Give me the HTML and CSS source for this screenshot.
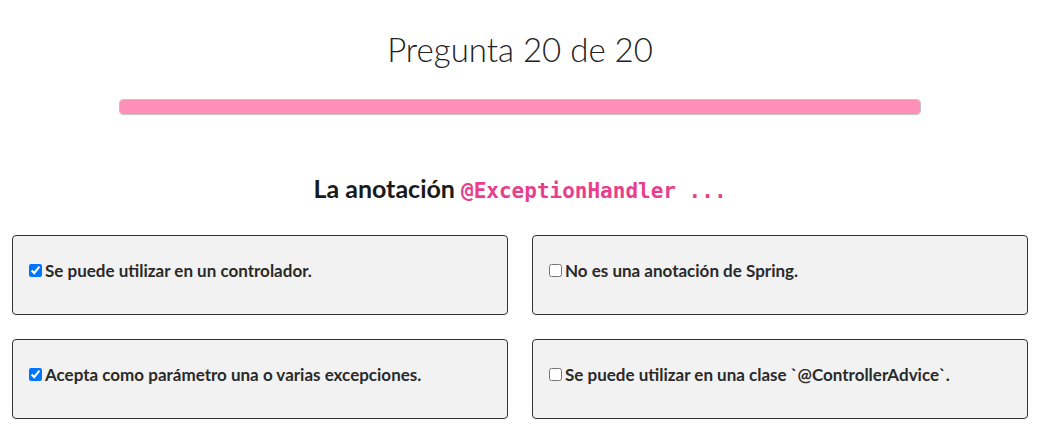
FILE: index.html
```html
<!DOCTYPE html>
<html lang="es">
<head>
<meta charset="utf-8">
<title>Pregunta 20 de 20</title>
<link rel="stylesheet" href="styles.css">
</head>
<body>
<main class="page">
  <h1 class="title">Pregunta 20 de 20</h1>
  <div class="progress"><div class="progress-fill" style="width:100%"></div></div>
  <h2 class="question">La anotación <code class="code">@ExceptionHandler ...</code></h2>
  <div class="options">
    <label class="option"><input type="checkbox" class="check" checked><span>Se puede utilizar en un controlador.</span></label>
    <label class="option"><input type="checkbox" class="check"><span>No es una anotación de Spring.</span></label>
    <label class="option"><input type="checkbox" class="check" checked><span>Acepta como parámetro una o varias excepciones.</span></label>
    <label class="option"><input type="checkbox" class="check"><span>Se puede utilizar en una clase `@ControllerAdvice`.</span></label>
  </div>
</main>
</body>
</html>
```
FILE: styles.css
```css
html, body {
  margin: 0;
  padding: 0;
  background: #fff;
}
body {
  font-family: Lato, "Liberation Sans", sans-serif;
  color: #222;
}
.page {
  width: 1040px;
  padding-top: 1px;
}
.title {
  margin: 28px 0 0;
  text-align: center;
  font-weight: 300;
  font-size: 33px;
  line-height: 40px;
  color: #222;
}
.progress {
  box-sizing: border-box;
  width: 802px;
  height: 16px;
  margin: 30px auto 0;
  border: 1px solid #c4c4c4;
  border-radius: 4px;
  background: #eee;
  overflow: hidden;
}
.progress-fill {
  height: 100%;
  background: #ff8fb8;
}
.question {
  margin: 58px 0 0;
  text-align: center;
  font-weight: 700;
  font-size: 25px;
  line-height: 30px;
  color: #1a1a1a;
}
.code {
  font-family: "DejaVu Sans Mono", monospace;
  font-size: 21px;
  font-weight: 700;
  color: #e83e8c;
}
.options {
  display: grid;
  grid-template-columns: 1fr 1fr;
  column-gap: 24px;
  row-gap: 24px;
  padding: 0 12px;
  margin-top: 29px;
}
.option {
  box-sizing: border-box;
  height: 80px;
  display: flex;
  align-items: flex-start;
  padding: 25px 12px 0;
  background: #f2f2f2;
  border: 1px solid #333;
  border-radius: 4px;
  font-weight: 700;
  font-size: 17px;
  line-height: 20px;
  color: #2a2a2a;
}
.check {
  width: 13px;
  height: 13px;
  margin: 3px 3px 0 4px;
  flex: none;
}
```
